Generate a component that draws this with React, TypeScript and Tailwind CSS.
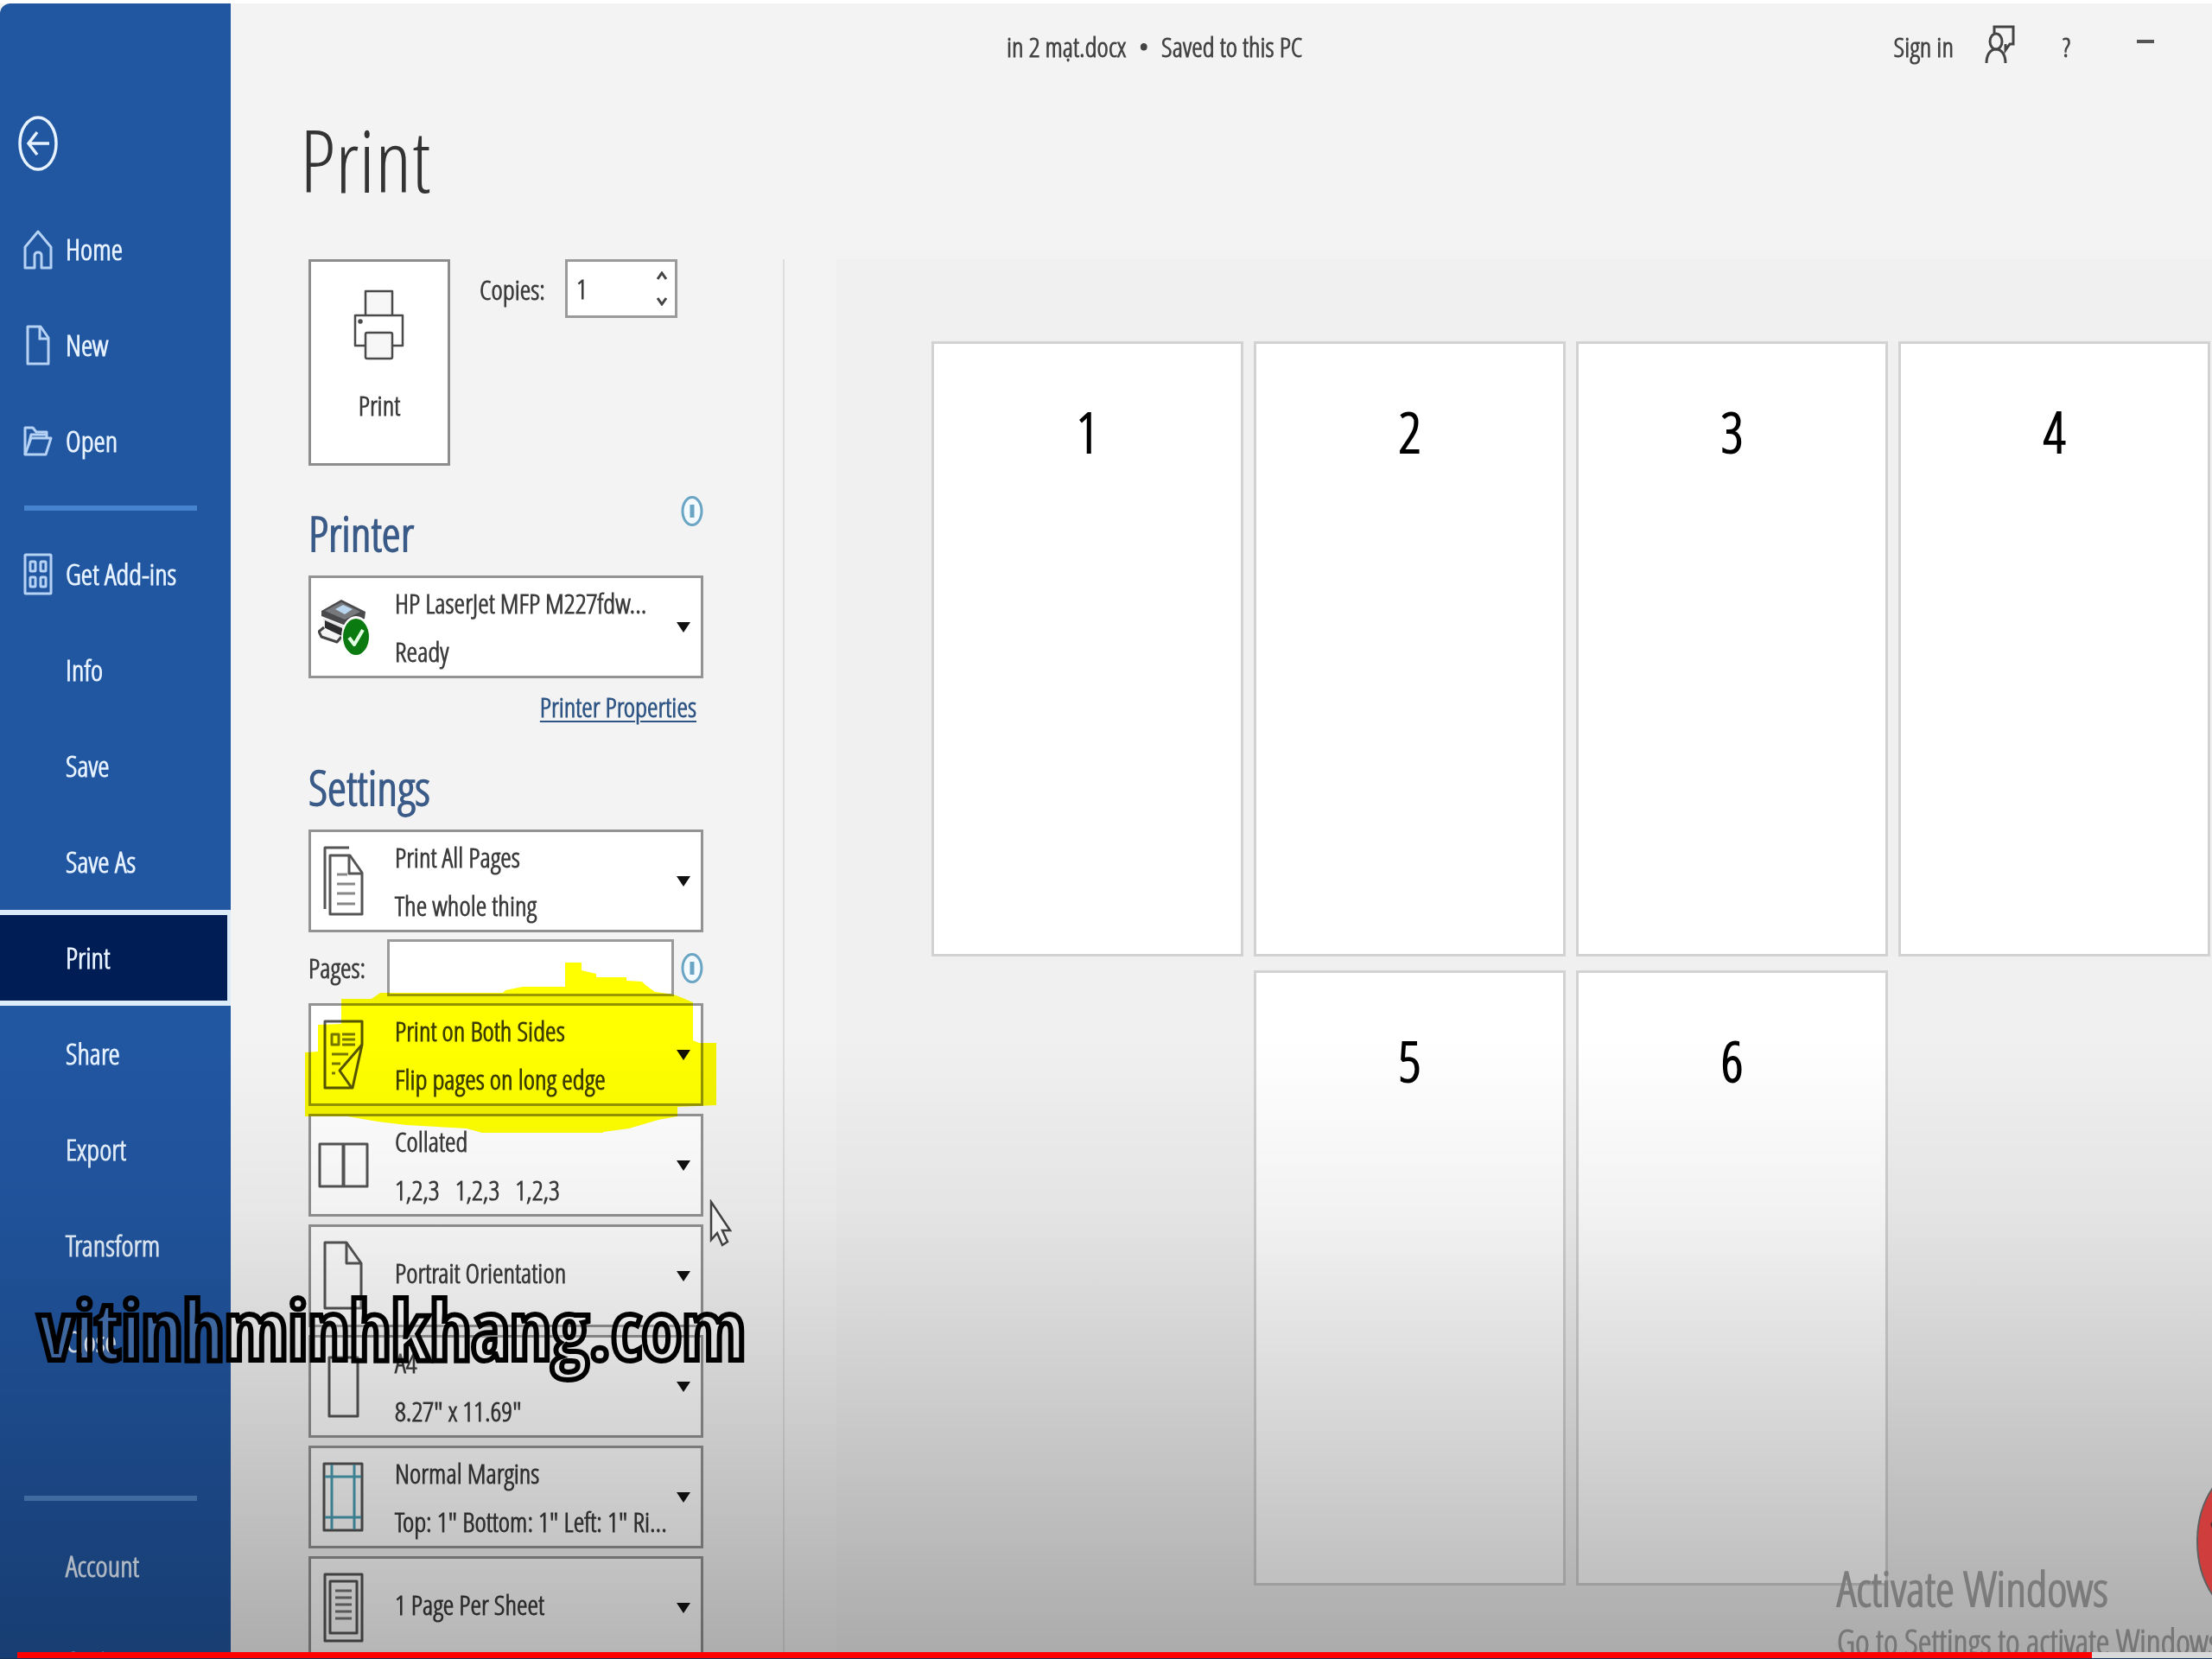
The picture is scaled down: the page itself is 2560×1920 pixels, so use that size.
import { useState } from "react";
import type { ReactNode } from "react";

const NAV_TOP = [
  { label: "Home", icon: <HomeIcon /> },
  { label: "New", icon: <NewIcon /> },
  { label: "Open", icon: <OpenIcon /> },
];

const NAV_MIDDLE = [
  { label: "Get Add-ins", icon: <AddInsIcon /> },
  { label: "Info" },
  { label: "Save" },
  { label: "Save As" },
  { label: "Print", active: true },
  { label: "Share" },
  { label: "Export" },
  { label: "Transform" },
  { label: "Close" },
];

const NAV_BOTTOM = [{ label: "Account" }, { label: "Options" }];

const PREVIEW_PAGES = [1, 2, 3, 4, 5, 6];

/* ---------- sidebar icons ---------- */

function HomeIcon() {
  return (
    <svg width="34" height="48" viewBox="0 0 34 48" fill="none" stroke="currentColor" strokeWidth="3">
      <path d="M2 21 17 3l15 18v24H21V31c0-2-1-4-4-4s-4 2-4 4v14H2z" strokeLinejoin="round" />
    </svg>
  );
}

function NewIcon() {
  return (
    <svg width="34" height="48" viewBox="0 0 34 48" fill="none" stroke="currentColor" strokeWidth="3">
      <path d="M5 2h15l9 13v30H5z" strokeLinejoin="round" />
      <path d="M19 2v14h10" />
    </svg>
  );
}

function OpenIcon() {
  return (
    <svg width="34" height="40" viewBox="0 0 34 40" fill="none" stroke="currentColor" strokeWidth="3" strokeLinejoin="round">
      <path d="M2 35V4h9l4 5h12v7" />
      <path d="M2 35 9 16h23l-6 19z" />
      <path d="M6 24 9 12h17" />
    </svg>
  );
}

function AddInsIcon() {
  return (
    <svg width="34" height="50" viewBox="0 0 34 50" fill="none" stroke="currentColor" strokeWidth="3">
      <rect x="2" y="2" width="30" height="45" rx="1" />
      <rect x="8" y="10" width="6" height="11" rx="1" />
      <rect x="20" y="10" width="6" height="11" rx="1" />
      <rect x="8" y="28" width="6" height="11" rx="1" />
      <rect x="20" y="28" width="6" height="11" rx="1" />
    </svg>
  );
}

/* ---------- setting icons, all on a 60x84 board ---------- */

function Board({ children }: { children: ReactNode }) {
  return (
    <svg width="60" height="84" viewBox="0 0 60 84" fill="none" stroke="#555" strokeWidth="3" strokeLinejoin="round">
      {children}
    </svg>
  );
}

function PrinterStatusIcon() {
  return (
    <Board>
      <g stroke="none">
        <path d="M4 23 27 10l28 14-1 8-22 8L4 29z" fill="#4a4a4c" />
        <path d="M8 23 27 13l22 11-18 9z" fill="#77797c" />
        <path d="m20 21 9-5 11 5-9 6z" fill="#b9d6ee" />
        <path d="M6 31l26 10 20-7v18L30 60 8 50z" fill="#e4e4e6" />
        <path d="M8 34l20 9v9L8 43z" fill="#2d2d2f" />
      </g>
      <path d="M7 42 1 47l3 6 18 6 5-6" fill="#f4f4f4" stroke="#444" />
      <ellipse cx="44" cy="53" rx="17" ry="24" fill="#fff" stroke="none" />
      <ellipse cx="44" cy="53" rx="15" ry="21" fill="#0b7a10" stroke="none" />
      <path d="m36 54 6 8 10-17" stroke="#e3ffe3" strokeWidth="4" />
    </Board>
  );
}

function AllPagesIcon() {
  return (
    <Board>
      <path d="M8 74V3h28" />
      <path d="M14 12h23l14 20v48H14z" fill="#fff" />
      <path d="M36 12v21h15" />
      <path d="M22 34h12M22 45h21M22 56h21M22 68h21" stroke="#888" />
    </Board>
  );
}

function BothSidesIcon() {
  return (
    <Board>
      <path d="M8 3h43v27L40 80H8z" />
      <path d="M51 30 25 60l14 20" />
      <path d="M16 18h8v12h-8z M28 18h15M28 24h15M28 30h15M16 41h19M16 52h10M16 63h4" stroke="#777" />
    </Board>
  );
}

function CollatedIcon() {
  return (
    <Board>
      <path d="M2 17h55v49H2z" fill="#fff" fillOpacity="0.5" />
      <path d="M29.5 17v49" strokeWidth="4" />
    </Board>
  );
}

function PortraitIcon() {
  return (
    <Board>
      <path d="M8 3h25l17 24v52H8z" />
      <path d="M33 3v24h17" />
    </Board>
  );
}

function PaperIcon() {
  return (
    <Board>
      <path d="M13 8h33v68H13z" />
    </Board>
  );
}

function MarginsIcon() {
  return (
    <Board>
      <path d="M7 3h44v77H7z" fill="#fff" fillOpacity="0.3" />
      <path d="M16 4v75M42 4v75M8 18h42M8 65h42" stroke="#4b9fb5" />
    </Board>
  );
}

function PerSheetIcon() {
  return (
    <Board>
      <rect x="8" y="3" width="43" height="77" />
      <rect x="14" y="11" width="31" height="60" />
      <path d="M20 22h19M20 30h19M20 38h19M20 46h19M20 54h19" stroke="#777" />
    </Board>
  );
}

function BigPrinterIcon() {
  return (
    <svg width="60" height="82" viewBox="0 0 60 82" fill="none" stroke="#4a4a4a" strokeWidth="2.5" strokeLinejoin="round">
      <path d="M14 30V2h31v28" fill="#f7f7f7" />
      <path d="M14 65H2V30h55v35H45" />
      <rect x="14" y="50" width="31" height="30" rx="2" fill="#f7f7f7" />
      <circle cx="8" cy="37" r="1.5" fill="#4a4a4a" />
    </svg>
  );
}

function InfoIcon() {
  return (
    <svg width="26" height="37" viewBox="0 0 26 37" fill="none" stroke="#6ba5c4" strokeWidth="3">
      <ellipse cx="13" cy="18.5" rx="11" ry="16" fill="#f4fbff" />
      <path d="M13 11v15" strokeWidth="5" />
    </svg>
  );
}

function FeedbackIcon() {
  return (
    <svg width="36" height="50" viewBox="0 0 36 50" fill="none" stroke="#444" strokeWidth="3">
      <ellipse cx="13" cy="19" rx="7" ry="9" />
      <path d="M2 44c0-9 4-16 11-16s11 7 11 16" />
      <path d="M11 9V2h22v20h-4l-5 7v-7" />
    </svg>
  );
}

/* ---------- layout pieces ---------- */

interface NavItemProps {
  label: string;
  icon?: ReactNode;
  active?: boolean;
}

function NavItem({ label, icon, active }: NavItemProps) {
  return (
    <li>
      <a
        href="#"
        aria-current={active ? "page" : undefined}
        className={
          active
            ? "flex h-[111px] items-center border-y-6 border-r-4 border-[#dcebfa] bg-[#001d56] pl-[27px]"
            : "flex h-[111px] items-center pl-[27px]"
        }
      >
        <span className="w-[49px] text-[#b5d2f5]">{icon}</span>
        {label}
      </a>
    </li>
  );
}

interface DropdownProps {
  name: string;
  icon: ReactNode;
  title: string;
  detail?: string;
}

function Dropdown({ name, icon, title, detail }: DropdownProps) {
  return (
    <div className="relative flex h-[119px] items-center border-3 border-[#939393] bg-white pl-2">
      {icon}
      <div className={detail ? "ml-[29px] flex-1 leading-[56px] whitespace-pre" : "ml-[29px] flex-1 pb-2"}>
        <p>{title}</p>
        {detail && <p>{detail}</p>}
      </div>
      <svg width="16" height="12" viewBox="0 0 16 12" className="mr-3">
        <path d="M0 0h16L8 12z" fill="#111" />
      </svg>
      <select aria-label={name} className="absolute inset-0 h-full w-full cursor-pointer opacity-0">
        <option>{title}</option>
      </select>
    </div>
  );
}

function Sidebar() {
  return (
    <aside className="w-[267px] shrink-0 overflow-hidden rounded-tl-xl bg-[#2156a1] text-[34px] font-semibold text-[#e6f2ff]">
      <button type="button" aria-label="Back" className="mt-[130px] mb-[35px] ml-[21px] block">
        <svg width="46" height="64" viewBox="0 0 46 64" fill="none" stroke="#e6f2ff" strokeWidth="3.5">
          <ellipse cx="23" cy="32" rx="21" ry="30" />
          <path d="M36 32H12M22 19 12 32l10 13" />
        </svg>
      </button>
      <nav>
        <ul>
          {NAV_TOP.map((item) => (
            <NavItem key={item.label} {...item} />
          ))}
        </ul>
        <div className="flex h-[43px] items-center px-7">
          <hr className="h-[6px] w-[200px] border-0 bg-[#4583cf]" />
        </div>
        <ul>
          {NAV_MIDDLE.map((item) => (
            <NavItem key={item.label} {...item} />
          ))}
        </ul>
        <div className="flex h-[149px] items-end px-7 pb-5">
          <hr className="h-[6px] w-[200px] border-0 bg-[#4f86c8]" />
        </div>
        <ul>
          {NAV_BOTTOM.map((item) => (
            <NavItem key={item.label} {...item} />
          ))}
        </ul>
      </nav>
    </aside>
  );
}

// Marker strokes over the duplex setting
function Highlight() {
  return (
    <svg
      width="476"
      height="197"
      viewBox="353 1115 476 197"
      className="pointer-events-none absolute -top-[47px] -left-1 mix-blend-multiply"
    >
      <path
        fill="#ffff00"
        d="M395 1157h35l10-7h142l3-3 20-4h49v-28h19v9l17 4v4h35v4l18 1 4 4 11 8 22 3 10 4 12 5v44l7 3h20v72l-45 2v11l-22 4-34 10-30 4v1H558l-18-5-70-4-33-4-35-6h-49v-74l15-1v-31l27-1z"
      />
    </svg>
  );
}

function PrintForm() {
  const [copies, setCopies] = useState(1);

  return (
    <form className="mt-9 ml-[10px] w-[457px] shrink-0 font-semibold text-[#3c3c3c]">
      <div className="flex items-start">
        <button
          type="button"
          className="flex h-[239px] w-[164px] flex-col items-center border-3 border-[#8d8d8d] bg-white pt-8"
        >
          <BigPrinterIcon />
          <span className="mt-[30px] leading-[44px]">Print</span>
        </button>
        <label htmlFor="copies" className="ml-[34px] w-[99px] leading-[70px]">
          Copies:
        </label>
        <div className="flex h-[68px] w-[130px] items-center border-3 border-[#9a9a9a] bg-white">
          <input
            id="copies"
            inputMode="numeric"
            value={copies}
            onChange={(e) => setCopies(Number(e.target.value) || 1)}
            className="w-[102px] pl-[10px] outline-none"
          />
          <div className="flex flex-col gap-5">
            <button type="button" aria-label="More copies" onClick={() => setCopies(copies + 1)}>
              <svg width="14" height="10" viewBox="0 0 14 10" fill="none" stroke="#444" strokeWidth="3">
                <path d="m2 9 5-7 5 7" />
              </svg>
            </button>
            <button type="button" aria-label="Fewer copies" onClick={() => setCopies(Math.max(1, copies - 1))}>
              <svg width="14" height="10" viewBox="0 0 14 10" fill="none" stroke="#444" strokeWidth="3">
                <path d="m2 1 5 7 5-7" />
              </svg>
            </button>
          </div>
        </div>
      </div>

      <div className="flex items-start justify-between pt-[34px]">
        <h2 className="mt-[10px] mb-[17px] text-[56px] leading-[66px] font-semibold text-[#3a5a88]">Printer</h2>
        <InfoIcon />
      </div>
      <Dropdown name="Printer" icon={<PrinterStatusIcon />} title="HP LaserJet MFP M227fdw..." detail="Ready" />
      <div className="flex justify-end pt-[13px] pr-2">
        <a href="#" className="leading-[40px] text-[#2f5585] underline decoration-2 underline-offset-4">
          Printer Properties
        </a>
      </div>

      <h2 className="mt-[39px] mb-[17px] text-[56px] leading-[66px] font-semibold text-[#3a5a88]">Settings</h2>
      <Dropdown name="Print range" icon={<AllPagesIcon />} title="Print All Pages" detail="The whole thing" />
      <div className="flex items-center py-2">
        <label htmlFor="pages" className="w-[91px]">
          Pages:
        </label>
        <input id="pages" type="text" className="mr-2 h-[66px] w-[333px] border-3 border-[#9a9a9a] bg-white px-2 outline-none" />
        <InfoIcon />
      </div>
      <div className="relative flex flex-col gap-[9px]">
        <Dropdown name="Sides" icon={<BothSidesIcon />} title="Print on Both Sides" detail="Flip pages on long edge" />
        <Dropdown name="Collation" icon={<CollatedIcon />} title="Collated" detail="1,2,3   1,2,3   1,2,3" />
        <Dropdown name="Orientation" icon={<PortraitIcon />} title="Portrait Orientation" />
        <Dropdown name="Paper size" icon={<PaperIcon />} title="A4" detail={'8.27" x 11.69"'} />
        <Dropdown name="Margins" icon={<MarginsIcon />} title="Normal Margins" detail={'Top: 1" Bottom: 1" Left: 1" Ri...'} />
        <Dropdown name="Pages per sheet" icon={<PerSheetIcon />} title="1 Page Per Sheet" />
        <Highlight />
        {/* mouse pointer */}
        <svg
          width="28"
          height="56"
          viewBox="0 0 28 56"
          className="pointer-events-none absolute top-[227px] left-[464px]"
        >
          <path d="M2 3v44l7-8 6 14 6-4-6-13h9z" fill="#fff" stroke="#444" strokeWidth="2.5" />
        </svg>
      </div>
    </form>
  );
}

function Preview() {
  return (
    <section aria-label="Preview" className="ml-[92px] flex-1 border-l-2 border-[#dedede] pl-[60px]">
      <ol className="flex flex-wrap justify-center gap-x-3 gap-y-4 bg-[#f0f0f0] pt-[95px] pb-[95px] pl-[108px]">
        {PREVIEW_PAGES.map((page) => (
          <li
            key={page}
            className="h-[712px] w-[361px] border-3 border-[#d2d2d2] bg-white pt-[70px] text-center text-[64px] leading-[64px] font-semibold text-black"
          >
            {page}
          </li>
        ))}
      </ol>
    </section>
  );
}

export default function App() {
  return (
    <div className="relative flex h-screen overflow-hidden border-t-4 border-white bg-[#f3f3f3] font-['Open_Sans_Condensed_Light','Open_Sans_Condensed','Open_Sans',sans-serif] text-[32px]">
      <Sidebar />

      <div className="min-w-0 flex-1 pl-[80px]">
        <header className="flex h-[100px] items-center font-semibold text-[#444]">
          <p className="ml-[818px]">in 2 mạt.docx&nbsp; •&nbsp; Saved to this PC</p>
          <div className="ml-auto flex items-center pr-[66px]">
            <a href="#">Sign in</a>
            <button type="button" aria-label="Feedback" className="ml-9">
              <FeedbackIcon />
            </button>
            <button type="button" aria-label="Help" className="ml-[54px]">
              ?
            </button>
            <button type="button" aria-label="Minimize" className="ml-[76px] h-10">
              <svg width="22" height="20" viewBox="0 0 22 20">
                <path d="M1 4h20" stroke="#555" strokeWidth="4" />
              </svg>
            </button>
          </div>
        </header>
        <h1 className="text-[100px] leading-[160px] text-[#333]">Print</h1>
        <div className="flex items-stretch">
          <PrintForm />
          <div className="mt-9 flex flex-1">
            <Preview />
          </div>
        </div>
      </div>

      {/* Activation notice */}
      <div className="absolute bottom-[-13px] left-[2126px] font-semibold whitespace-nowrap text-[#a5a5a5]">
        <p className="text-[56px] leading-[60px]">Activate Windows</p>
        <p className="text-[40px] leading-[66px]">Go to Settings to activate Windows.</p>
      </div>

      {/* Player controls shade */}
      <div className="pointer-events-none absolute inset-x-0 bottom-0 h-[720px] bg-[linear-gradient(to_bottom,rgba(0,0,0,0),rgba(0,0,0,0.05)_28%,rgba(0,0,0,0.14)_56%,rgba(0,0,0,0.29))]" />

      {/* Channel watermark: black outline round a faint white fill */}
      <p className="pointer-events-none absolute bottom-[318px] left-[44px] font-['Open_Sans_Condensed','Open_Sans',sans-serif] text-[95px] leading-[130px] font-bold whitespace-nowrap text-white/15 [-webkit-text-stroke:6px_black]">
        vitinhminhkhang.com
      </p>

      <svg width="20" height="200" viewBox="0 0 20 200" className="absolute right-0 bottom-[36px]">
        <ellipse cx="73" cy="100" rx="70" ry="93" fill="#d03d3d" stroke="#5f5f5f" strokeWidth="2" />
        <path d="M18 80l2-3v8z" fill="#5f3030" />
      </svg>

      <div className="absolute inset-x-0 bottom-0 flex h-2 border-b border-[#16335c] pl-5">
        <div className="w-[2401px] bg-[#ff0000]" />
        <div className="flex-1 bg-[#d9d9d9]" />
      </div>
    </div>
  );
}
